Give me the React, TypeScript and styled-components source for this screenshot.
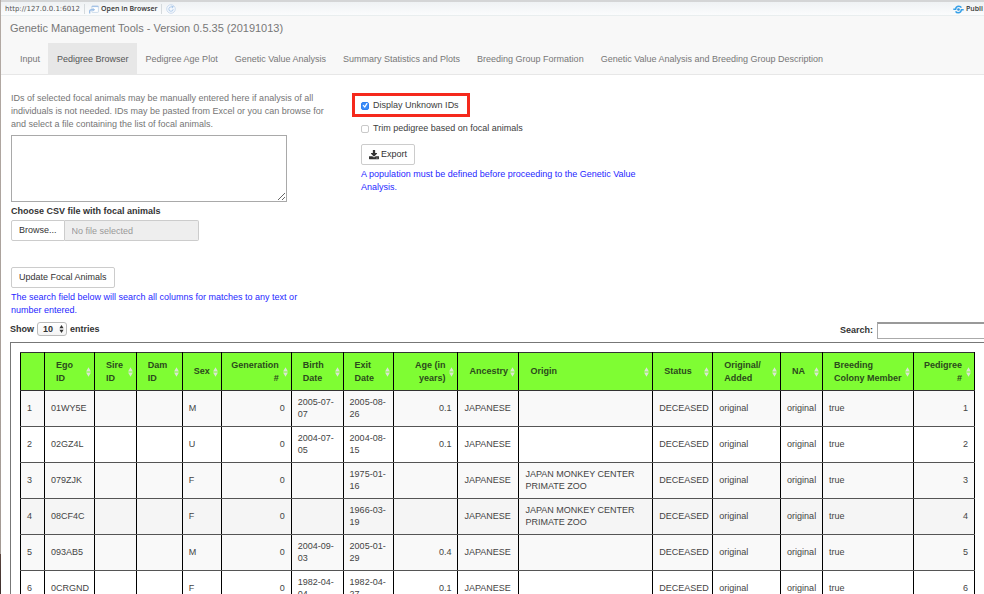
import React from "react";
import styled, { createGlobalStyle, css } from "styled-components";

const GlobalStyle = createGlobalStyle`
  * { box-sizing: border-box; }
  body {
    margin: 0;
    background: #fff;
    color: #404040;
    font-family: "Liberation Sans", Arial, sans-serif;
    font-size: 9px;
    line-height: 13px;
  }
  button, input, textarea, select { font: inherit; color: inherit; margin: 0; }
`;

const Page = styled.div`
  height: 100vh;
  overflow: hidden;
  padding-left: 1px;
  background:
    linear-gradient(#b3aaa4, #a39a94 calc(100% - 40px), #5c4640 calc(100% - 40px), #3c2e2c) 0 0 / 1px 100% no-repeat,
    #fff;
`;

const ViewerBar = styled.div`
  display: flex;
  align-items: center;
  height: 16px;
  padding: 1px 1px 0 4px;
  border-top: 2px solid #d4d5d6;
  border-bottom: 1px solid #e9eeef;
  background: linear-gradient(#eff2f4, #fbfcfd);
  font-family: "DejaVu Sans", sans-serif;
  font-size: 7px;
  line-height: 10px;
  color: #555;
`;

const Divider = styled.span`
  width: 1px;
  height: 10px;
  margin: 0 4px;
  background: #d5dadd;
`;

const ViewerButton = styled.button<{ $end?: boolean }>`
  display: flex;
  align-items: center;
  gap: 2px;
  padding: 0;
  border: 0;
  background: none;
  color: #333;
  font-family: "Open Sans", sans-serif;
  font-weight: 600;
  white-space: nowrap;
  ${(p) => p.$end && css`margin-left: auto;`}
`;

const Navbar = styled.header`
  background: #f8f8f8;
  border-bottom: 1px solid #e7e7e7;
  color: #777;
`;

const Brand = styled.h1`
  margin: 0;
  padding: 4px 9px 7px;
  font-size: 11px;
  line-height: 16px;
  font-weight: 400;
`;

const Tabs = styled.nav`
  display: flex;
  padding-left: 10px;
`;

const Tab = styled.a<{ $active?: boolean }>`
  padding: 10px 8px 8px 9px;
  white-space: nowrap;
  text-decoration: none;
  color: ${(p) => (p.$active ? "#555" : "#777")};
  background: ${(p) => (p.$active ? "#e7e7e7" : "transparent")};
`;

const Controls = styled.section`
  display: grid;
  grid-template-columns: minmax(0, 316fr) minmax(0, 280fr) 307fr;
  column-gap: 32px;
  padding: 17px 0 0 10px;
`;

const Column = styled.div`
  display: flex;
  flex-direction: column;
  align-items: flex-start;
`;

const HelpText = styled.p`
  margin: 0 0 4px;
  color: #757575;
`;

const Notice = styled.p`
  margin: 3px 0 0;
  color: #1f1fff;
`;

const FocalIds = styled.textarea`
  width: 276px;
  max-width: 100%;
  height: 67px;
  border: 1px solid #a9a9a9;
  background: #fff;
  outline: none;
`;

const FieldLabel = styled.label`
  margin: 3px 0 2px;
  font-weight: 700;
  color: #333;
`;

const FileGroup = styled.div`
  display: flex;
  width: 188px;
  margin-bottom: 26px;
`;

const Button = styled.button<{ $joined?: boolean }>`
  display: flex;
  align-items: center;
  gap: 2px;
  height: 21px;
  padding: 0 7px;
  border: 1px solid #ccc;
  border-radius: ${(p) => (p.$joined ? "2px 0 0 2px" : "2px")};
  background: #fff;
  color: #333;
  white-space: nowrap;
`;

const FileName = styled.input`
  flex: 1;
  min-width: 0;
  height: 21px;
  padding: 0 7px;
  border: 1px solid #ccc;
  border-left: 0;
  border-radius: 0 2px 2px 0;
  background: #eee;
  &::placeholder { color: #999; opacity: 1; }
`;

const Option = styled.label<{ $marked?: boolean }>`
  display: flex;
  align-items: center;
  gap: 4px;
  margin-left: -9px;
  padding: 5px 9px 9px;
  ${(p) =>
    p.$marked &&
    css`
      margin-top: 1px;
      padding: 3px 8px 2px 6px;
      border: 3px solid #f5291c;
    `}
`;

const Tick = styled.input`
  appearance: none;
  width: 8px;
  height: 8px;
  border: 1px solid #c9c9c9;
  border-radius: 2px;
  background: #fff;
  &:checked {
    border-color: #2f80f3;
    background: #3b8cf7;
  }
  &:checked::after {
    content: "";
    display: block;
    width: 6px;
    height: 6px;
    background: #fff;
    clip-path: polygon(8% 50%, 24% 36%, 42% 58%, 76% 6%, 94% 18%, 46% 92%);
  }
`;

const ListBar = styled.div`
  display: flex;
  align-items: center;
  justify-content: space-between;
  height: 17px;
  margin: 5px 0 3px 9px;
  font-weight: 700;
  color: #333;
`;

const LengthLabel = styled.label`
  display: flex;
  align-items: center;
  gap: 3px;
  height: 14px;
  align-self: flex-start;
`;

const SelectWrap = styled.span`
  position: relative;
  display: flex;
  svg { position: absolute; right: 3px; top: 3px; pointer-events: none; }
`;

const LengthSelect = styled.select`
  appearance: none;
  width: 30px;
  height: 14px;
  padding: 0 5px;
  border: 1px solid #bbb;
  border-radius: 3px;
  background: linear-gradient(#fff, #f4f4f4);
  line-height: 12px;
`;

const SearchLabel = styled.label`
  display: flex;
  align-items: center;
  gap: 4px;
`;

const SearchBox = styled.input`
  width: 107px;
  height: 17px;
  border: 1px solid #aaa;
  border-top: 2px solid #999;
  border-right: 0;
  background: #fff;
`;

const TableFrame = styled.div`
  margin-left: 9px;
  padding: 9px;
  border: 1px solid #777;
  border-right: 0;
`;

const DataTable = styled.table`
  width: 100%;
  table-layout: fixed;
  border-collapse: collapse;
  line-height: 12px;
  color: #444;
`;

const Col = styled.col<{ $share: number }>`
  width: ${(p) => (p.$share / 955) * 100}%;
`;

const Head = styled.th<{ $right?: boolean }>`
  position: relative;
  height: 38px;
  padding: ${(p) => (p.$right ? "0 12px 0 6px" : "0 10px 0 11px")};
  border: 1px solid;
  border-color: #333 #000;
  background: #7ffd33;
  color: #2b4a1c;
  line-height: 13px;
  text-align: ${(p) => (p.$right ? "right" : "left")};
  svg { position: absolute; right: 3px; top: 14px; }
`;

const Row = styled.tr<{ $tone: string }>`
  height: 36px;
  background: ${(p) => p.$tone};
`;

const Cell = styled.td<{ $right?: boolean }>`
  padding: 0 6px 1px;
  border: 1px solid;
  border-color: #555 #000;
  text-align: ${(p) => (p.$right ? "right" : "left")};
`;

const OpenIcon = () => (
  <svg width="10" height="9" viewBox="0 0 10 9" aria-hidden="true">
    <rect x="2.8" y="0.8" width="6.6" height="6.6" rx="0.8" fill="#fff" stroke="#c3d3e6" strokeWidth="0.8" />
    <path d="M2.8 1.5h6.6" stroke="#a5c3e6" strokeWidth="1.2" />
    <path d="M0.6 8.6V6.6C0.6 5.4 1.3 4.7 2.4 4.7H4" fill="none" stroke="#9dbfe6" strokeWidth="1.4" />
    <path d="M3.6 2.8 6.2 4.7 3.6 6.6z" fill="#9dbfe6" />
  </svg>
);

const RefreshIcon = () => (
  <svg width="10" height="10" viewBox="0 0 10 10" aria-hidden="true">
    <circle cx="5" cy="5" r="4.3" fill="#f4f8fd" stroke="#c8d8ec" strokeWidth="0.9" />
    <path d="M7.2 5.2A2.2 2.2 0 1 1 5.4 2.9" fill="none" stroke="#a9c6e8" strokeWidth="0.9" />
    <path d="M5.2 1.4 8 2.4 6 4.6z" fill="#a9c6e8" />
  </svg>
);

const PublishIcon = () => (
  <svg width="11" height="9" viewBox="0 0 11 9" aria-hidden="true">
    <circle cx="5.5" cy="4.5" r="1.3" fill="#2f93dd" />
    <path d="M0.3 4.2H2.6C2.8 2.2 4.2 1.2 5.8 1.2 7 1.2 7.9 1.8 8.4 2.7" fill="none" stroke="#35a0e8" strokeWidth="1.5" />
    <path d="M10.7 4.8H8.4C8.2 6.8 6.8 7.8 5.2 7.8 4 7.8 3.1 7.2 2.6 6.3" fill="none" stroke="#35a0e8" strokeWidth="1.5" />
  </svg>
);

const DownloadIcon = () => (
  <svg width="10" height="10" viewBox="0 -128 1664 1664" aria-hidden="true">
    <path
      fill="#333"
      d="M1280 1216q0-26-19-45t-45-19-45 19-19 45 19 45 45 19 45-19 19-45zm256 0q0-26-19-45t-45-19-45 19-19 45 19 45 45 19 45-19 19-45zm128-224v320q0 40-28 68t-68 28H96q-40 0-68-28t-28-68V992q0-40 28-68t68-28h465l135 136q58 56 136 56t136-56l136-136h464q40 0 68 28t28 68zm-325-569q17 41-14 70l-448 448q-18 19-45 19t-45-19L339 493q-31-29-14-70 17-39 59-39h256V-64q0-26 19-45t45-19h256q26 0 45 19t19 45v448h256q42 0 59 39z"
    />
  </svg>
);

const SortIcon = () => (
  <svg width="5" height="10" viewBox="0 0 5 10" aria-hidden="true">
    <path d="M2.5 0.3 4.9 4.6H0.1zM2.5 9.7 0.1 5.4H4.9z" fill="#dbe6d3" />
  </svg>
);

const StepperIcon = () => (
  <svg width="5" height="8" viewBox="0 0 5 8" aria-hidden="true">
    <path d="M2.5 0 4.6 3.2H0.4zM2.5 8 0.4 4.8H4.6z" fill="#333" />
  </svg>
);

const tabs = [
  "Input",
  "Pedigree Browser",
  "Pedigree Age Plot",
  "Genetic Value Analysis",
  "Summary Statistics and Plots",
  "Breeding Group Formation",
  "Genetic Value Analysis and Breeding Group Description",
];

type ColumnDef = { lines: string[]; share: number; right?: boolean };

const columns: ColumnDef[] = [
  { lines: [], share: 24 },
  { lines: ["Ego", "ID"], share: 50 },
  { lines: ["Sire", "ID"], share: 42 },
  { lines: ["Dam", "ID"], share: 46 },
  { lines: ["Sex"], share: 39 },
  { lines: ["Generation", "#"], share: 70, right: true },
  { lines: ["Birth", "Date"], share: 52 },
  { lines: ["Exit", "Date"], share: 50 },
  { lines: ["Age (in", "years)"], share: 65, right: true },
  { lines: ["Ancestry"], share: 61 },
  { lines: ["Origin"], share: 134 },
  { lines: ["Status"], share: 60 },
  { lines: ["Original/", "Added"], share: 68 },
  { lines: ["NA"], share: 42 },
  { lines: ["Breeding", "Colony Member"], share: 91 },
  { lines: ["Pedigree", "#"], share: 61, right: true },
];

const zoo = "JAPAN MONKEY CENTER PRIMATE ZOO";

const animals = [
  { id: "01WY5E", sex: "M", birth: "2005-07-07", exit: "2005-08-26", age: "0.1", origin: "" },
  { id: "02GZ4L", sex: "U", birth: "2004-07-05", exit: "2004-08-15", age: "0.1", origin: "" },
  { id: "079ZJK", sex: "F", birth: "", exit: "1975-01-16", age: "", origin: zoo },
  { id: "08CF4C", sex: "F", birth: "", exit: "1966-03-19", age: "", origin: zoo },
  { id: "093AB5", sex: "M", birth: "2004-09-03", exit: "2005-01-29", age: "0.4", origin: "" },
  { id: "0CRGND", sex: "F", birth: "1982-04-04", exit: "1982-04-27", age: "0.1", origin: "" },
];

const highlighted = 3;
const toneOf = (i: number) => (i === highlighted ? "#f5f5f5" : i % 2 === 0 ? "#f9f9f9" : "#fff");

export default function App() {
  return (
    <>
      <GlobalStyle />
      <Page>
        <ViewerBar>
          <span>http://127.0.0.1:6012</span>
          <Divider />
          <ViewerButton type="button">
            <OpenIcon />
            Open in Browser
          </ViewerButton>
          <Divider />
          <ViewerButton type="button" aria-label="Refresh">
            <RefreshIcon />
          </ViewerButton>
          <ViewerButton type="button" $end>
            <PublishIcon />
            Publi
          </ViewerButton>
        </ViewerBar>

        <Navbar>
          <Brand>Genetic Management Tools - Version 0.5.35 (20191013)</Brand>
          <Tabs>
            {tabs.map((name) => (
              <Tab key={name} href="#" $active={name === "Pedigree Browser"}>
                {name}
              </Tab>
            ))}
          </Tabs>
        </Navbar>

        <Controls>
          <Column>
            <HelpText id="ids-help">
              IDs of selected focal animals may be manually entered here if analysis of all individuals is not
              needed. IDs may be pasted from Excel or you can browse for and select a file containing the list of
              focal animals.
            </HelpText>
            <FocalIds aria-labelledby="ids-help" />
            <FieldLabel htmlFor="csv">Choose CSV file with focal animals</FieldLabel>
            <FileGroup>
              <Button type="button" $joined>
                Browse...
              </Button>
              <FileName id="csv" type="text" placeholder="No file selected" readOnly />
            </FileGroup>
            <Button type="button">Update Focal Animals</Button>
            <Notice>
              The search field below will search all columns for matches to any text or number entered.
            </Notice>
          </Column>
          <Column>
            <Option $marked>
              <Tick type="checkbox" defaultChecked />
              Display Unknown IDs
            </Option>
            <Option>
              <Tick type="checkbox" />
              Trim pedigree based on focal animals
            </Option>
            <Button type="button">
              <DownloadIcon />
              Export
            </Button>
            <Notice>A population must be defined before proceeding to the Genetic Value Analysis.</Notice>
          </Column>
        </Controls>

        <ListBar>
          <LengthLabel>
            Show
            <SelectWrap>
              <LengthSelect defaultValue="10">
                <option>10</option>
                <option>25</option>
                <option>50</option>
              </LengthSelect>
              <StepperIcon />
            </SelectWrap>
            entries
          </LengthLabel>
          <SearchLabel>
            Search:
            <SearchBox type="search" />
          </SearchLabel>
        </ListBar>

        <TableFrame>
          <DataTable>
            <colgroup>
              {columns.map((c, i) => (
                <Col key={i} $share={c.share} />
              ))}
            </colgroup>
            <thead>
              <tr>
                {columns.map((c, i) => (
                  <Head key={i} $right={c.right}>
                    {c.lines.map((line, n) => (
                      <React.Fragment key={line}>
                        {n > 0 && <br />}
                        {line}
                      </React.Fragment>
                    ))}
                    {c.lines.length > 0 && <SortIcon />}
                  </Head>
                ))}
              </tr>
            </thead>
            <tbody>
              {animals.map((a, i) => (
                <Row key={a.id} $tone={toneOf(i)}>
                  <Cell>{i + 1}</Cell>
                  <Cell>{a.id}</Cell>
                  <Cell />
                  <Cell />
                  <Cell>{a.sex}</Cell>
                  <Cell $right>0</Cell>
                  <Cell>{a.birth}</Cell>
                  <Cell>{a.exit}</Cell>
                  <Cell $right>{a.age}</Cell>
                  <Cell>JAPANESE</Cell>
                  <Cell>{a.origin}</Cell>
                  <Cell>DECEASED</Cell>
                  <Cell>original</Cell>
                  <Cell>original</Cell>
                  <Cell>true</Cell>
                  <Cell $right>{i + 1}</Cell>
                </Row>
              ))}
            </tbody>
          </DataTable>
        </TableFrame>
      </Page>
    </>
  );
}
